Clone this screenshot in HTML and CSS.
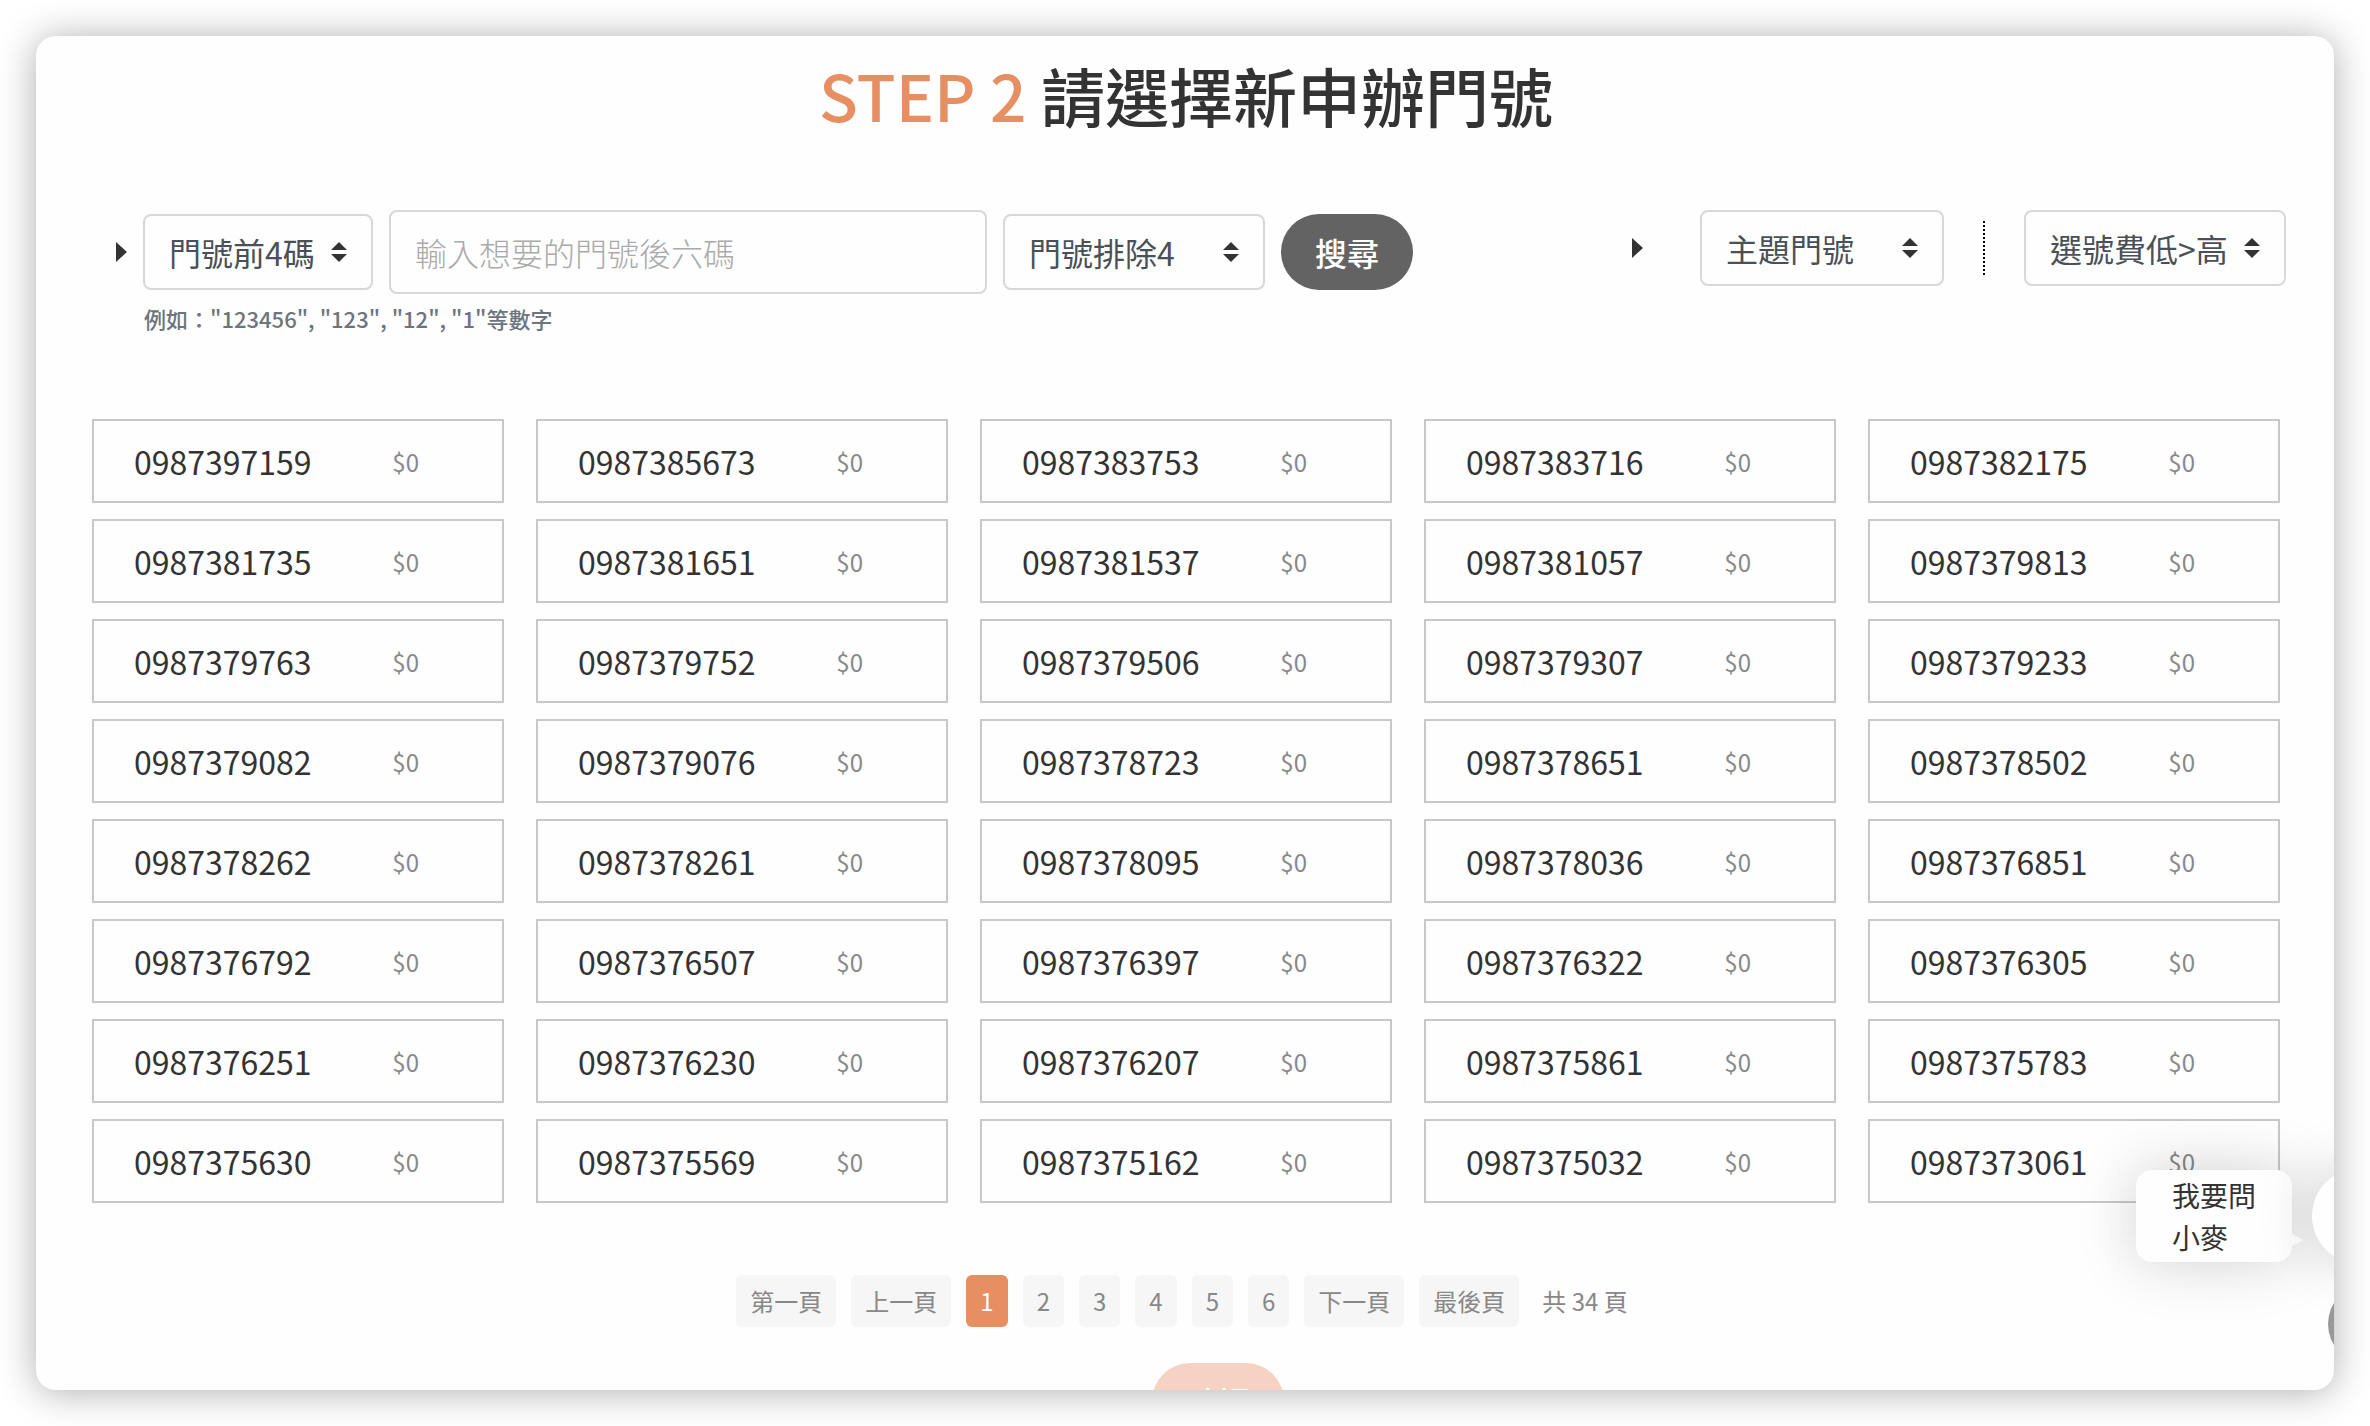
FILE: index.html
```html
<!DOCTYPE html>
<html lang="zh-Hant">
<head>
    <meta charset="UTF-8">
    <meta name="viewport" content="width=device-width, initial-scale=1.0">
    <title>請選擇新申辦門號</title>
    <link rel="stylesheet" href="styles.css">
</head>
<body>
    <main class="card">
        <h1 class="title"><span>STEP 2</span> 請選擇新申辦門號</h1>

        <form class="filters" onsubmit="return false;">
            <div class="filter-search">
                <div class="filter-row">
                    <i class="caret"></i>
                    <div class="select-box prefix">
                        <select aria-label="門號前4碼">
                            <option>門號前4碼</option>
                        </select>
                        <svg viewBox="0 0 16 20"><path d="M8 0l8 8H0zM8 20l8-8H0z"/></svg>
                    </div>
                    <input type="text" class="keyword" placeholder="輸入想要的門號後六碼" aria-label="門號後六碼">
                    <div class="select-box exclude">
                        <select aria-label="門號排除4">
                            <option>門號排除4</option>
                        </select>
                        <svg viewBox="0 0 16 20"><path d="M8 0l8 8H0zM8 20l8-8H0z"/></svg>
                    </div>
                    <button type="submit" class="btn btn-search">搜尋</button>
                </div>
                <p class="hint">例如："123456", "123", "12", "1"等數字</p>
            </div>

            <div class="filter-sort">
                <i class="caret"></i>
                <div class="select-box theme">
                    <select aria-label="主題門號">
                        <option>主題門號</option>
                    </select>
                    <svg viewBox="0 0 16 20"><path d="M8 0l8 8H0zM8 20l8-8H0z"/></svg>
                </div>
                <div class="divider"></div>
                <div class="select-box exclude">
                    <select aria-label="排序">
                        <option>選號費低&gt;高</option>
                    </select>
                    <svg viewBox="0 0 16 20"><path d="M8 0l8 8H0zM8 20l8-8H0z"/></svg>
                </div>
            </div>
        </form>

        <div class="numbers">
            <button type="button" class="number">0987397159 <span>$0</span></button>
            <button type="button" class="number">0987385673 <span>$0</span></button>
            <button type="button" class="number">0987383753 <span>$0</span></button>
            <button type="button" class="number">0987383716 <span>$0</span></button>
            <button type="button" class="number">0987382175 <span>$0</span></button>

            <button type="button" class="number">0987381735 <span>$0</span></button>
            <button type="button" class="number">0987381651 <span>$0</span></button>
            <button type="button" class="number">0987381537 <span>$0</span></button>
            <button type="button" class="number">0987381057 <span>$0</span></button>
            <button type="button" class="number">0987379813 <span>$0</span></button>

            <button type="button" class="number">0987379763 <span>$0</span></button>
            <button type="button" class="number">0987379752 <span>$0</span></button>
            <button type="button" class="number">0987379506 <span>$0</span></button>
            <button type="button" class="number">0987379307 <span>$0</span></button>
            <button type="button" class="number">0987379233 <span>$0</span></button>

            <button type="button" class="number">0987379082 <span>$0</span></button>
            <button type="button" class="number">0987379076 <span>$0</span></button>
            <button type="button" class="number">0987378723 <span>$0</span></button>
            <button type="button" class="number">0987378651 <span>$0</span></button>
            <button type="button" class="number">0987378502 <span>$0</span></button>

            <button type="button" class="number">0987378262 <span>$0</span></button>
            <button type="button" class="number">0987378261 <span>$0</span></button>
            <button type="button" class="number">0987378095 <span>$0</span></button>
            <button type="button" class="number">0987378036 <span>$0</span></button>
            <button type="button" class="number">0987376851 <span>$0</span></button>

            <button type="button" class="number">0987376792 <span>$0</span></button>
            <button type="button" class="number">0987376507 <span>$0</span></button>
            <button type="button" class="number">0987376397 <span>$0</span></button>
            <button type="button" class="number">0987376322 <span>$0</span></button>
            <button type="button" class="number">0987376305 <span>$0</span></button>

            <button type="button" class="number">0987376251 <span>$0</span></button>
            <button type="button" class="number">0987376230 <span>$0</span></button>
            <button type="button" class="number">0987376207 <span>$0</span></button>
            <button type="button" class="number">0987375861 <span>$0</span></button>
            <button type="button" class="number">0987375783 <span>$0</span></button>

            <button type="button" class="number">0987375630 <span>$0</span></button>
            <button type="button" class="number">0987375569 <span>$0</span></button>
            <button type="button" class="number">0987375162 <span>$0</span></button>
            <button type="button" class="number">0987375032 <span>$0</span></button>
            <button type="button" class="number">0987373061 <span>$0</span></button>
        </div>

        <nav class="pager">
            <a href="#">第一頁</a>
            <a href="#">上一頁</a>
            <a href="#" class="active">1</a>
            <a href="#">2</a>
            <a href="#">3</a>
            <a href="#">4</a>
            <a href="#">5</a>
            <a href="#">6</a>
            <a href="#">下一頁</a>
            <a href="#">最後頁</a>
            <span>共 34 頁</span>
        </nav>

        <div class="actions">
            <button type="button" class="btn btn-confirm" disabled>確認</button>
        </div>

        <!-- Floating chat helper -->
        <div class="chat-bubble">我要問小麥</div>
        <div class="chat-avatar"></div>
        <div class="back-top"></div>
    </main>
</body>
</html>
```

FILE: styles.css
```css
* {
    box-sizing: border-box;
}
body {
    font-family: 'Noto Sans CJK TC', sans-serif;
    font-size: 32px;
    margin: 0;
    padding: 36px;
    background: #fff;
    color: #333;
}
button, input, select {
    font-family: inherit;
    font-size: inherit;
    margin: 0;
}
.card {
    position: relative;
    height: calc(100vh - 72px);
    padding: 18px 54px 0 56px;
    background: #fefefe;
    border-radius: 20px;
    box-shadow: 0 2px 38px rgba(0, 0, 0, 0.32);
    overflow: hidden;
}
.title {
    margin: 0 0 76px;
    font-size: 64px;
    line-height: 80px;
    font-weight: 500;
    text-align: center;
}
.title span {
    color: #e78f62;
}

/* Filters */
.filters {
    display: flex;
    align-items: flex-start;
    justify-content: space-between;
    gap: 40px;
    margin: 0 -6px 87px 24px;
}
.filter-search {
    flex: 0 1 1297px;
}
.filter-row {
    display: flex;
    align-items: center;
    gap: 16px;
}
.filter-sort {
    display: flex;
    align-items: center;
    height: 76px;
}
.caret {
    border-left: 11px solid #333;
    border-top: 10px solid transparent;
    border-bottom: 10px solid transparent;
}
.select-box {
    position: relative;
    flex: none;
}
.select-box svg {
    position: absolute;
    right: 26px;
    top: 28px;
    width: 16px;
    height: 20px;
    fill: #333;
    pointer-events: none;
}
.select-box select {
    appearance: none;
    width: 100%;
    height: 76px;
    padding: 0 24px;
    border: 2px solid #d8d8d8;
    border-radius: 8px;
    background: #fefefe;
    color: #495057;
}
.prefix {
    width: 230px;
}
.exclude {
    width: 262px;
}
.theme {
    width: 244px;
    margin-left: 57px;
}
.divider {
    height: 54px;
    margin: 0 39px;
    border-left: 2px dotted #000;
}
.keyword {
    flex: 1;
    min-width: 0;
    height: 84px;
    padding: 0 24px;
    border: 2px solid #d8d8d8;
    border-radius: 8px;
    background: #fefefe;
    font-weight: 300;
}
.keyword::placeholder {
    color: #aaa;
}
.hint {
    margin: 10px 0 0 28px;
    font-size: 22px;
    line-height: 28px;
    font-weight: 500;
    color: #6c757d;
}
.btn {
    height: 76px;
    padding: 0 34px;
    border: none;
    border-radius: 38px;
    color: #fff;
    font-weight: 500;
    white-space: nowrap;
}
.btn-search {
    background: #636363;
}
.btn-confirm {
    background: #f5d2c1;
}

/* Number list */
.numbers {
    display: grid;
    grid-template-columns: repeat(5, 1fr);
    gap: 16px 32px;
}
.number {
    display: flex;
    align-items: center;
    justify-content: space-between;
    height: 84px;
    padding: 0 83px 0 40px;
    border: 2px solid #c8c8c8;
    background: #fefefe;
    color: #333;
}
.number span {
    font-size: 24px;
    color: #888;
}

/* Pagination */
.pager {
    display: flex;
    justify-content: center;
    gap: 15px;
    margin-top: 72px;
    font-size: 24px;
    line-height: 52px;
    color: #888;
}
.pager a {
    padding: 0 14px;
    border-radius: 6px;
    background: #f6f6f6;
    color: #888;
    text-decoration: none;
}
.pager a.active {
    background: #e78f62;
    color: #fff;
}
.pager span {
    padding: 0 8px;
}
.actions {
    margin-top: 36px;
    padding-left: 64px;
    text-align: center;
}

/* Chat */
.chat-bubble {
    position: absolute;
    right: 42px;
    bottom: 128px;
    width: 156px;
    padding: 4px 36px;
    border-radius: 16px;
    background: #fefefe;
    box-shadow: 0 0 60px rgba(0, 0, 0, 0.18);
    font-size: 28px;
    line-height: 42px;
}
.chat-bubble::after {
    content: "";
    position: absolute;
    left: 100%;
    top: 64px;
    border-left: 12px solid #fefefe;
    border-top: 6px solid transparent;
    border-bottom: 6px solid transparent;
}
.chat-avatar {
    position: absolute;
    right: -74px;
    bottom: 126px;
    width: 96px;
    height: 96px;
    border-radius: 50%;
    background: #fefefe;
    box-shadow: 0 0 60px rgba(0, 0, 0, 0.18);
}
.back-top {
    position: absolute;
    right: -74px;
    bottom: 26px;
    width: 80px;
    height: 80px;
    border-radius: 50%;
    background: #989898;
}
```
